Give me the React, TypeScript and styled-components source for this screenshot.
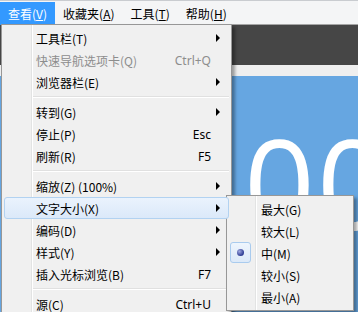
import styled, { createGlobalStyle } from "styled-components";

const GlobalStyle = createGlobalStyle`
  html, body {
    margin: 0;
    padding: 0;
  }
  body {
    font-family: "Noto Sans CJK SC", "Noto Sans", sans-serif;
    font-size: 12px;
    color: #000;
  }
`;

type MenuEntry =
  | {
      kind: "item";
      label: string;
      shortcut?: string;
      arrow?: boolean;
      disabled?: boolean;
      active?: boolean;
      checked?: boolean;
    }
  | { kind: "sep" };

const menuTitles = [
  { name: "查看", key: "V", open: true },
  { name: "收藏夹", key: "A" },
  { name: "工具", key: "T" },
  { name: "帮助", key: "H" },
];

const viewMenu: MenuEntry[] = [
  { kind: "item", label: "工具栏(T)", arrow: true },
  { kind: "item", label: "快速导航选项卡(Q)", shortcut: "Ctrl+Q", disabled: true },
  { kind: "item", label: "浏览器栏(E)", arrow: true },
  { kind: "sep" },
  { kind: "item", label: "转到(G)", arrow: true },
  { kind: "item", label: "停止(P)", shortcut: "Esc" },
  { kind: "item", label: "刷新(R)", shortcut: "F5" },
  { kind: "sep" },
  { kind: "item", label: "缩放(Z) (100%)", arrow: true },
  { kind: "item", label: "文字大小(X)", arrow: true, active: true },
  { kind: "item", label: "编码(D)", arrow: true },
  { kind: "item", label: "样式(Y)", arrow: true },
  { kind: "item", label: "插入光标浏览(B)", shortcut: "F7" },
  { kind: "sep" },
  { kind: "item", label: "源(C)", shortcut: "Ctrl+U" },
];

const textSizeMenu: MenuEntry[] = [
  { kind: "item", label: "最大(G)" },
  { kind: "item", label: "较大(L)" },
  { kind: "item", label: "中(M)", checked: true },
  { kind: "item", label: "较小(S)" },
  { kind: "item", label: "最小(A)" },
];

const MenuList = ({ entries, wide }: { entries: MenuEntry[]; wide?: boolean }) => (
  <>
    {entries.map((e, i) =>
      e.kind === "sep" ? (
        <Separator key={i} />
      ) : (
        <Row key={i} active={e.active} disabled={e.disabled}>
          {e.checked && (
            <Check>
              <Dot />
            </Check>
          )}
          <Label>{e.label}</Label>
          {wide && <Shortcut>{e.shortcut}</Shortcut>}
          {wide && <ArrowCell>{e.arrow && <Arrow />}</ArrowCell>}
        </Row>
      )
    )}
  </>
);

export default function App() {
  return (
    <>
      <GlobalStyle />
      <Window>
        <MenuBar>
          {menuTitles.map((m) => (
            <MenuTitle key={m.name} open={m.open}>
              {m.name}(<u>{m.key}</u>)
            </MenuTitle>
          ))}
        </MenuBar>
        <Page>
          <DarkBand />
          <LightStrip />
          <BlueArea>
            <BigText>00</BigText>
          </BlueArea>
        </Page>

        <Dropdown>
          <MenuList entries={viewMenu} wide />
        </Dropdown>
        <SubMenu>
          <MenuList entries={textSizeMenu} />
        </SubMenu>
      </Window>
    </>
  );
}

const Window = styled.div`
  position: relative;
  width: 358px;
  height: 312px;
  overflow: hidden;
  display: flex;
  flex-direction: column;
  background: #66a6e1;
`;

const MenuBar = styled.div`
  display: flex;
  height: 25px;
  box-sizing: border-box;
  padding-top: 1px;
  background: #f4f5f6;
  border-top: 1px solid #c9ccd0;
  border-bottom: 1px solid #a5a5a5;
`;

type TitleProps = { open?: boolean };
const MenuTitle = styled.div<TitleProps>`
  display: flex;
  align-items: center;
  padding: 0 8px;
  height: 23px;
  background: ${(p: TitleProps) => (p.open ? "#3399ff" : "transparent")};
  color: ${(p: TitleProps) => (p.open ? "#fff" : "#000")};
  white-space: nowrap;

  u {
    text-underline-offset: 1px;
  }
`;

const Page = styled.div`
  flex: 1;
  display: flex;
  flex-direction: column;
`;

const DarkBand = styled.div`
  height: 40px;
  background: #464646;
`;

const LightStrip = styled.div`
  height: 11px;
  background: #efefef;
`;

const BlueArea = styled.div`
  flex: 1;
  background: #66a6e1;
  padding: 44px 0 0 244px;
`;

const BigText = styled.div`
  font-family: "Open Sans", sans-serif;
  font-size: 124px;
  line-height: 1;
  color: #fff;
  letter-spacing: 2px;
`;

const MenuPanel = styled.div`
  position: absolute;
  background: #f0f0f0;
  border: 1px solid #979797;
  padding: 2px;
  box-shadow: 3px 3px 3px rgba(0, 0, 0, 0.35);
  display: flex;
  flex-direction: column;

  &::before {
    content: "";
    position: absolute;
    top: 0;
    bottom: 0;
    left: 29px;
    width: 1px;
    background: #e2e3e3;
    border-right: 1px solid #ffffff;
  }
`;

const Dropdown = styled(MenuPanel)`
  left: 1px;
  top: 24px;
  width: 225px;
`;

const SubMenu = styled(MenuPanel)`
  left: 226px;
  top: 195px;
  width: 122px;

  &::before {
    left: 28px;
  }
`;

type RowProps = { active?: boolean; disabled?: boolean };
const Row = styled.div<RowProps>`
  position: relative;
  display: flex;
  align-items: center;
  height: 22px;
  box-sizing: border-box;
  padding-left: 31px;
  border: 1px solid ${(p: RowProps) => (p.active ? "#b2d2f1" : "transparent")};
  border-radius: 3px;
  background: ${(p: RowProps) =>
    p.active ? "linear-gradient(#eaf3fd, #dbe9f9)" : "transparent"};
  color: ${(p: RowProps) => (p.disabled ? "#8d8d8d" : "#000")};
  white-space: nowrap;
  z-index: 1;
`;

const Label = styled.span`
  flex: 1;
`;

const Shortcut = styled.span`
  font-family: "Noto Sans", sans-serif;
  font-size: 12px;
  text-align: right;
`;

const ArrowCell = styled.span`
  width: 17px;
  height: 100%;
  display: flex;
  align-items: center;
  padding-left: 5px;
  box-sizing: border-box;
`;

const Arrow = styled.span`
  width: 0;
  height: 0;
  border-left: 4px solid #000;
  border-top: 4px solid transparent;
  border-bottom: 4px solid transparent;
`;

const Check = styled.span`
  position: absolute;
  left: 0;
  top: -1px;
  width: 21px;
  height: 21px;
  box-sizing: border-box;
  border: 1px solid #a9cbee;
  border-radius: 3px;
  background: linear-gradient(#eef5fd, #dce9f8);
  display: flex;
  align-items: center;
  justify-content: center;
`;

const Dot = styled.span`
  width: 7px;
  height: 7px;
  border-radius: 50%;
  background: radial-gradient(circle at 35% 35%, #9fa8e0, #2c3a92 70%);
`;

const Separator = styled.div`
  height: 8px;
  display: flex;
  align-items: center;
  padding-left: 28px;

  &::after {
    content: "";
    flex: 1;
    height: 1px;
    background: #e0e0e0;
    border-bottom: 1px solid #ffffff;
  }
`;
